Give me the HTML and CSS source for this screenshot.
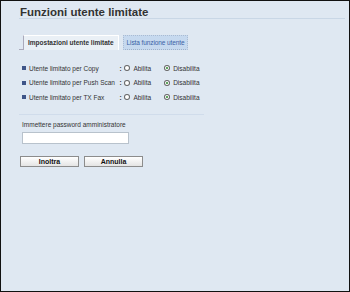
FILE: index.html
```html
<!DOCTYPE html>
<html lang="it">
<head>
  <meta charset="UTF-8">
  <title>Funzioni utente limitate</title>
  <link rel="stylesheet" href="styles.css">
</head>
<body>
  <div class="frame">
    <h1>Funzioni utente limitate</h1>

    <div class="tabs">
      <span class="tab-lead"></span>
      <div class="tab active">Impostazioni utente limitate</div>
      <div class="tab">Lista funzione utente</div>
    </div>

    <div class="rows">
      <div class="row">
        <span class="bullet"></span>
        <span class="label">Utente limitato per Copy</span>
        <span class="colon">:</span>
        <span class="radio"></span><span class="opt">Abilita</span>
        <span class="radio checked"></span><span class="opt">Disabilita</span>
      </div>
      <div class="row">
        <span class="bullet"></span>
        <span class="label">Utente limitato per Push Scan</span>
        <span class="colon">:</span>
        <span class="radio"></span><span class="opt">Abilita</span>
        <span class="radio checked"></span><span class="opt">Disabilita</span>
      </div>
      <div class="row">
        <span class="bullet"></span>
        <span class="label">Utente limitato per TX Fax</span>
        <span class="colon">:</span>
        <span class="radio"></span><span class="opt">Abilita</span>
        <span class="radio checked"></span><span class="opt">Disabilita</span>
      </div>
    </div>

    <div class="password">
      <div class="pw-label">Immettere password amministratore</div>
      <input type="password" class="pw-input">
    </div>

    <div class="buttons">
      <button>Inoltra</button>
      <button>Annulla</button>
    </div>
  </div>
</body>
</html>
```

FILE: styles.css
```css
html, body {
  margin: 0;
  padding: 0;
}

body {
  font-family: "Liberation Sans", Arial, sans-serif;
  background: #000;
}

.frame {
  box-sizing: border-box;
  width: 350px;
  height: 292px;
  border: 1px solid #111;
  background: #dfe8f2;
  padding: 6px 4px 0 18px;
  color: #333;
}

h1 {
  margin: 0;
  padding: 0 0 0 1px;
  font-size: 11.5px;
  line-height: 11px;
  font-weight: bold;
  color: #333;
  border-bottom: 1px solid #c9d7e6;
}

.tabs {
  display: flex;
  align-items: flex-end;
  margin-top: 16px;
  height: 15px;
}

.tab-lead {
  width: 4px;
  border-bottom: 1px solid #aab;
}

.tab {
  font-size: 6.5px;
  line-height: 13px;
  white-space: nowrap;
  margin-right: 4px;
}

.tab.active {
  font-weight: bold;
  color: #333;
  background: #eaf0f6;
  border-left: 1px solid #aab;
  border-top: 1px solid #fff;
  border-right: 1px solid #fff;
  height: 14px;
  padding: 0 4px;
}

.tab:not(.active) {
  color: #3a5fa6;
  background: #c6d9ef;
  border: 1px dotted #aabbd2;
  border-bottom: 1px dotted #9fb1c9;
  height: 13px;
  padding: 0 3px;
  letter-spacing: -0.1px;
}

.rows {
  margin-top: 11px;
  padding-left: 3px;
  padding-bottom: 9px;
  border-bottom: 1px solid #d0dceb;
  width: 182px;
}

.row {
  display: flex;
  align-items: center;
  height: 14.5px;
  font-size: 6.5px;
  white-space: nowrap;
  color: #333;
}

.bullet {
  width: 4px;
  height: 4px;
  background: #3f5588;
  margin-right: 3px;
}

.label {
  width: 91px;
}

.colon {
  width: 5px;
  font-weight: bold;
}

.radio {
  box-sizing: border-box;
  width: 6px;
  height: 6px;
  border: 1px solid #666;
  border-radius: 50%;
  background: #fff;
  margin-right: 3px;
  position: relative;
}

.radio.checked::after {
  content: "";
  position: absolute;
  left: 1px;
  top: 1px;
  width: 2px;
  height: 2px;
  border-radius: 50%;
  background: #2a8a2a;
}

.opt {
  width: 31px;
}

.password {
  padding: 5px 0 0 3px;
}

.pw-label {
  font-size: 6.5px;
  line-height: 9px;
  color: #333;
}

.pw-input {
  display: block;
  box-sizing: border-box;
  width: 107px;
  height: 12px;
  margin-top: 3px;
  border: 1px solid #b8c2cc;
  background: #fff;
  padding: 0;
}

.buttons {
  display: flex;
  gap: 5px;
  margin-top: 12px;
  padding-left: 1px;
}

button {
  box-sizing: border-box;
  width: 59px;
  height: 11px;
  padding: 0;
  font-family: "Liberation Sans", Arial, sans-serif;
  font-size: 7px;
  font-weight: bold;
  line-height: 9px;
  color: #111;
  background: linear-gradient(#ffffff, #e4e4e4);
  border: 1px solid #8c8c8c;
  border-radius: 0;
}
```
